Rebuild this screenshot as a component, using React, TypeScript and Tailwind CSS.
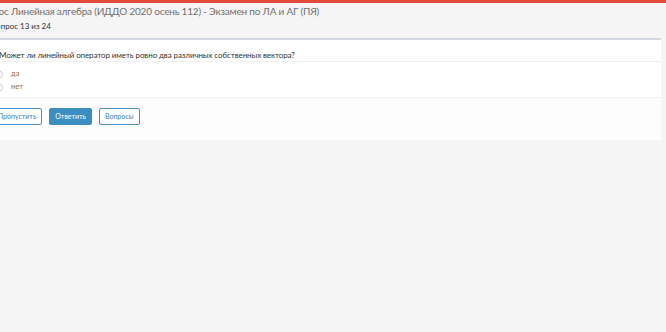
import React from 'react';

const options = ['да', 'нет'];

const App: React.FC = () => {
  return (
    <div className="w-[666px] h-[332px] overflow-hidden bg-[#f5f5f5] font-['Lato','Liberation_Sans',sans-serif]">
      {/* top accent */}
      <div className="h-[3px] bg-[#e04b3a]" />

      {/* header */}
      <header className="pt-[1px]">
        <h1 className="ml-[-20px] whitespace-nowrap text-[10px] tracking-[-0.2px] leading-[14px] text-[#707070]">
          Опрос Линейная алгебра (ИДДО 2020 осень 112) - Экзамен по ЛА и АГ (ПЯ)
        </h1>
        <p className="ml-[-9px] mt-[2px] whitespace-nowrap text-[8px] leading-[12px] text-[#333]">
          Вопрос 13 из 24
        </p>
      </header>

      {/* question panel */}
      <section className="mt-[6px] ml-[-20px] w-[681px] border-t-2 border-[#d3d8e0] bg-white">
        <div className="h-[22px] flex items-end pl-[19px] border-b border-[#f0f0f0]">
          <span className="whitespace-nowrap text-[8px] tracking-[-0.1px] leading-[12px] text-[#333]">
            Может ли линейный оператор иметь ровно два различных собственных вектора?
          </span>
        </div>

        <div className="flex flex-col gap-[3px] pt-[7px] pb-[5px] border-b border-[#f0f0f0]">
          {options.map((opt) => (
            <label key={opt} className="flex items-center h-[10px] pl-[14px]">
              <span className="w-[9px] h-[9px] rounded-full border border-[#ccc] bg-white" />
              <span className="ml-[8px] text-[7.5px] leading-[10px] text-[#9a6a3a]">{opt}</span>
            </label>
          ))}
        </div>

        <div className="flex items-start gap-[7px] pt-[10px] pb-[15px] pl-[12px] bg-[#fdfdfd]">
          <button className="h-[17px] px-[5px] rounded-[2px] border border-[#4a90c4] bg-white text-[7px] leading-none text-[#3a7fb5]">
            Пропустить
          </button>
          <button className="h-[17px] px-[5px] rounded-[2px] border border-[#3b8ec2] bg-[#3b8ec2] text-[7px] leading-none text-white">
            Ответить
          </button>
          <button className="h-[17px] px-[5px] rounded-[2px] border border-[#4a90c4] bg-white text-[7px] leading-none text-[#3a7fb5]">
            Вопросы
          </button>
        </div>
      </section>
    </div>
  );
};

export default App;
